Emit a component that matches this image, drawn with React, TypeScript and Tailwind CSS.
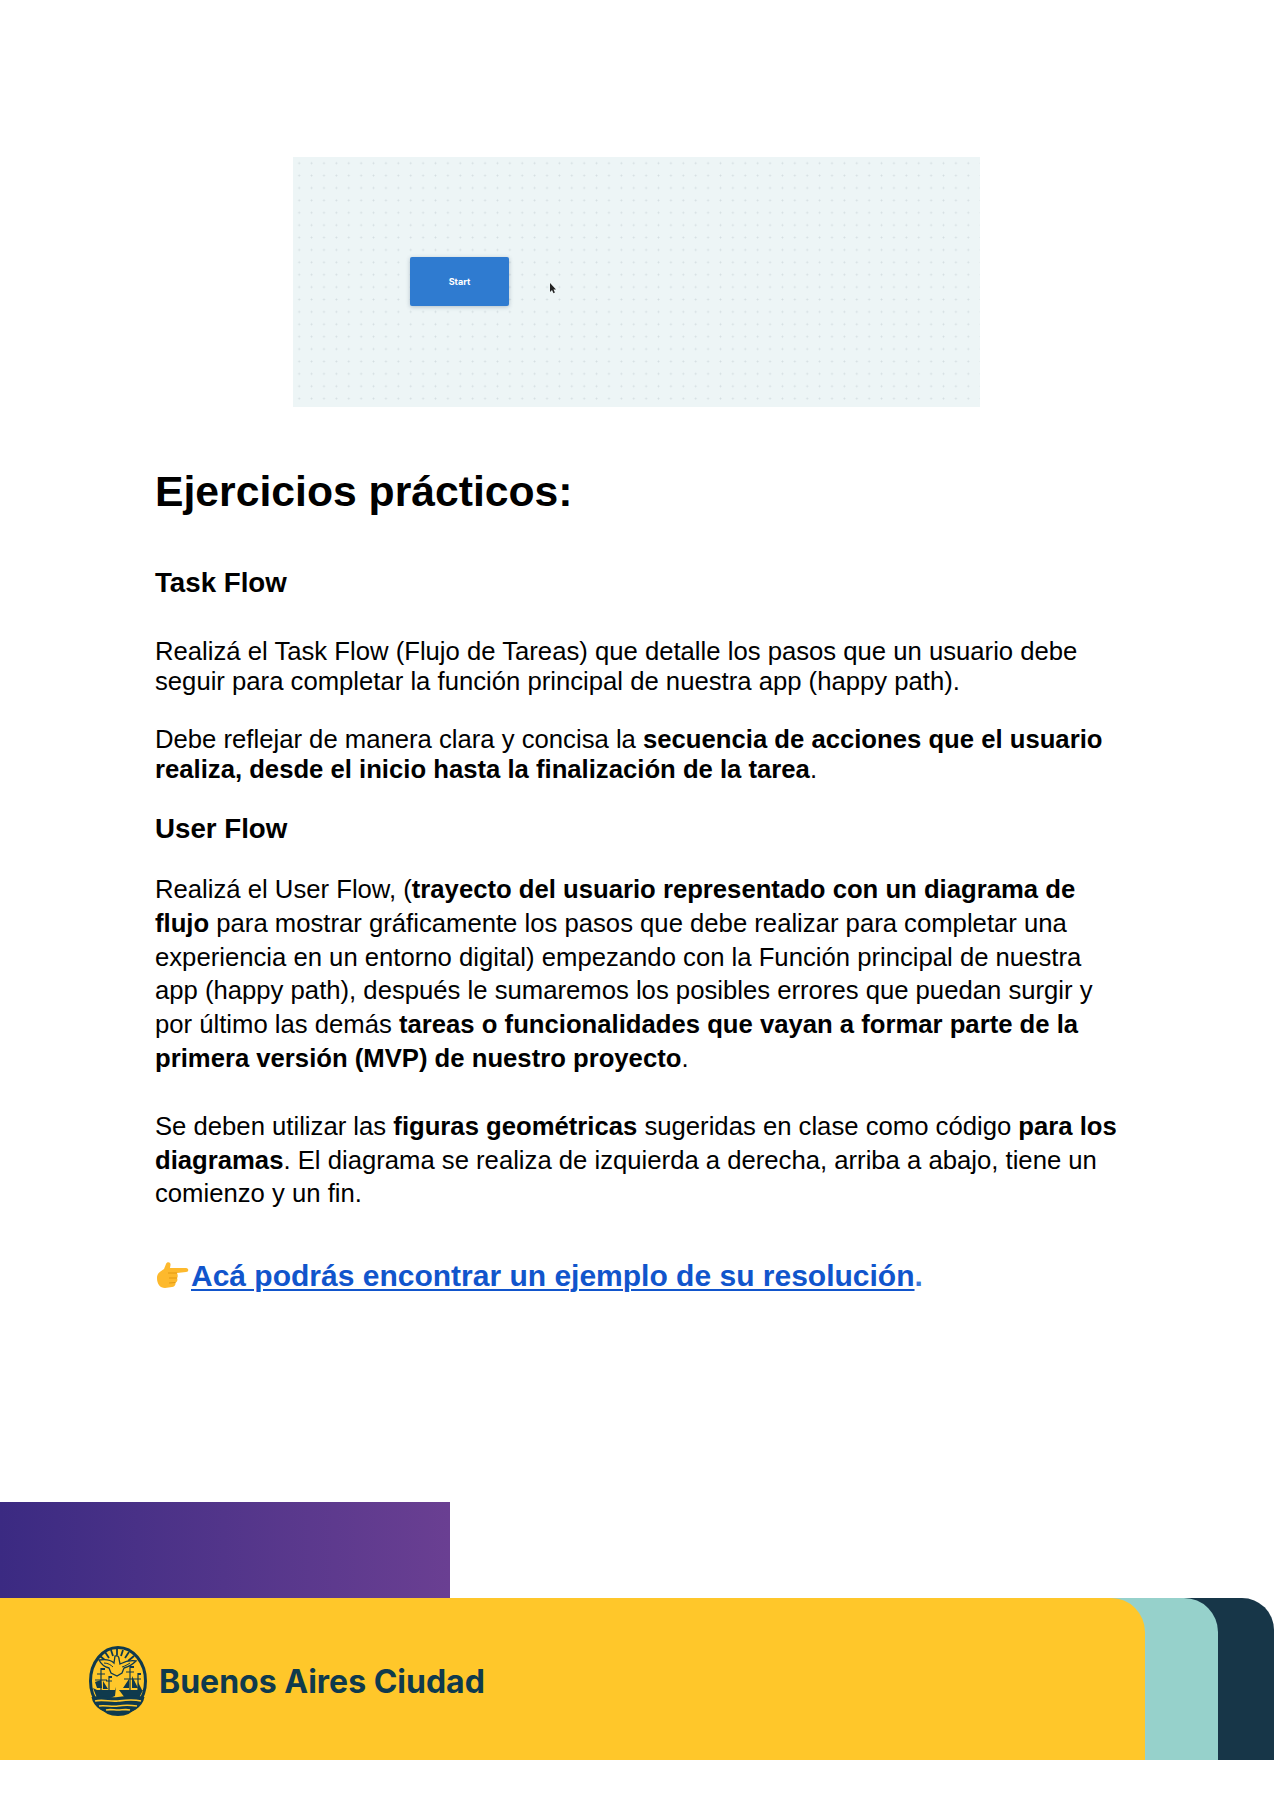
const navy = '#0f3a4d';

function CityLogo() {
  return (
    <svg width="58" height="70" viewBox="0 0 58 70" className="shrink-0">
      <ellipse cx="29" cy="35" rx="27.5" ry="33.5" fill="#ffc72a" stroke={navy} strokeWidth="3" />
      {/* sun rays */}
      <path d="M28 3v6M22 4l2 6M34 4l-2 6M16 6l4 6M40 6l-4 6M11 10l6 5M45 10l-6 5" stroke={navy} strokeWidth="1.8" />
      {/* bird */}
      <path
        d="M10 14c6-1 12 0 15 3l1-7c3-1 4 1 4 3l1 5c4-2 10-4 16-3-3 3-8 6-12 7l-2 5-5 3-6-3-2-5c-4-1-8-4-10-8z"
        fill="#ffc72a"
        stroke={navy}
        strokeWidth="1.3"
      />
      <path d="M15 17c4 0 7 2 9 4M33 21c3-1 5-2 8-4" stroke={navy} strokeWidth="1" fill="none" />
      {/* ships */}
      <path d="M12 22v26M8 28h8M6 34h12M20 30v18M17 35h6M41 20v28M37 26h8M35 33h12M49 27v22M46 33h6" stroke={navy} strokeWidth="1.2" fill="none" />
      <path d="M12 22h4v2h-4zM41 20h4v2h-4zM20 30h3v2h-3zM49 27h3v2h-3z" fill={navy} />
      <path d="M6 36l6-2 1 8h-5zM14 35l5 8h-5zM34 42l6-9v9zM43 30l6 12h-6zM49 36l4 8h-4z" fill={navy} />
      <path d="M4 42l4 2h18l1-3-1 9-5 2H8zM30 44l24 0-3 6-4 2H36z" fill={navy} />
      {/* water */}
      <path d="M2.5 51c8-2 17 1 26.500 0s18-2 26.500 0c-2 11-13 17-26.500 17S4.500 62 2.500 51z" fill={navy} />
      <path d="M6 55c8-2 15 1 23 0s14-2 23 0M10 60c6-1 13 1 19 0s12-1 19 0M17 64c4-1 8 0 12 0s8-1 12 0" stroke="#ffc72a" strokeWidth="1.7" fill="none" />
    </svg>
  );
}

export default function App() {
  return (
    <div className="h-[1800px] bg-white overflow-hidden font-['Liberation_Sans',Arial,sans-serif] text-[25.68px] text-black">
      <div className="pt-[157px] pl-[293px]">
        <div className="relative w-[687px] h-[250px] pl-[117px] pt-[100px] bg-[#edf5f6] bg-[radial-gradient(#d3dde0_0.7px,transparent_1.2px)] bg-[length:12.4px_12.4px]">
          <div className="w-[99px] h-[49px] flex items-center justify-center rounded-[2px] bg-[#2f7bd0] shadow-[0_1px_4px_rgba(40,70,100,0.3)] text-white text-[9px] font-bold font-['Inter',sans-serif]">
            Start
          </div>
          <svg className="absolute left-[256px] top-[126px]" width="8" height="11" viewBox="0 0 8 11">
            <path d="M1 0v9l2-2 1.5 3.2 1.4-.7L4.5 6.5H7z" fill="#222" />
          </svg>
        </div>
      </div>

      <div className="pl-[155px]">
        <h1 className="mt-[60px] text-[42.7px] leading-[48px] font-bold">Ejercicios prácticos:</h1>
        <h2 className="mt-[51px] text-[27.7px] leading-[34px] font-bold">Task Flow</h2>
        <p className="mt-[36px] leading-[30px]">
          Realizá el Task Flow (Flujo de Tareas) que detalle los pasos que un usuario debe
          <br />
          seguir para completar la función principal de nuestra app (happy path).
        </p>
        <p className="mt-[28px] leading-[30px]">
          Debe reflejar de manera clara y concisa la <b>secuencia de acciones que el usuario</b>
          <br />
          <b>realiza, desde el inicio hasta la finalización de la tarea</b>.
        </p>
        <h2 className="mt-[28px] text-[27.7px] leading-[34px] font-bold">User Flow</h2>
        <p className="mt-[27px] leading-[33.8px]">
          Realizá el User Flow, (<b>trayecto del usuario representado con un diagrama de</b>
          <br />
          <b>flujo</b> para mostrar gráficamente los pasos que debe realizar para completar una
          <br />
          experiencia en un entorno digital) empezando con la Función principal de nuestra
          <br />
          app (happy path), después le sumaremos los posibles errores que puedan surgir y
          <br />
          por último las demás <b>tareas o funcionalidades que vayan a formar parte de la</b>
          <br />
          <b>primera versión (MVP) de nuestro proyecto</b>.
        </p>
        <p className="mt-[34px] leading-[33.8px]">
          Se deben utilizar las <b>figuras geométricas</b> sugeridas en clase como código <b>para los</b>
          <br />
          <b>diagramas</b>. El diagrama se realiza de izquierda a derecha, arriba a abajo, tiene un
          <br />
          comienzo y un fin.
        </p>
        <div className="mt-[47px] flex items-center text-[30px] leading-[36px] font-bold text-[#1155cc]">
          <svg className="w-[36px] h-[32px]" viewBox="0 0 36 32">
            <path
              d="M2 18C2 13 6 11 9 9L11 4C12 1 16 2 15.500 5L15 8L31 8C34 8 34 12 31 12L22 13C23 15 23 17 22 18C23 20 22 22 20.500 22.500C21 25 19 27 17 27L10 28C5 28 2 24 2 18Z"
              fill="#fdb92d"
            />
            <path d="M13 13l9 0M14 18l8 0M14 23l6.500-.5" stroke="#e39a12" strokeWidth="1" fill="none" />
          </svg>
          <span>
            <a className="underline decoration-2 underline-offset-[3px]" href="#">
              Acá podrás encontrar un ejemplo de su resolución
            </a>
            <span className="text-[#3c78d8]">.</span>
          </span>
        </div>
      </div>

      <footer className="mt-[208px]">
        <div className="w-[450px] h-[96px] bg-gradient-to-r from-[#3b2a82] to-[#6a3f92]" />
        <div className="w-[1274px] h-[162px] rounded-tr-[32px] bg-[#173648]">
          <div className="w-[1218px] h-full rounded-tr-[34px] bg-[#96d1cb]">
            <div className="w-[1145px] h-full rounded-tr-[34px] bg-[#ffc72a] flex items-center pl-[89px] pt-[3px] gap-[12px]">
              <CityLogo />
              <span className="pt-[2px] text-[32px] font-bold text-[#0f3a4d] font-['Inter',sans-serif] leading-none">Buenos Aires Ciudad</span>
            </div>
          </div>
        </div>
      </footer>
    </div>
  );
}
